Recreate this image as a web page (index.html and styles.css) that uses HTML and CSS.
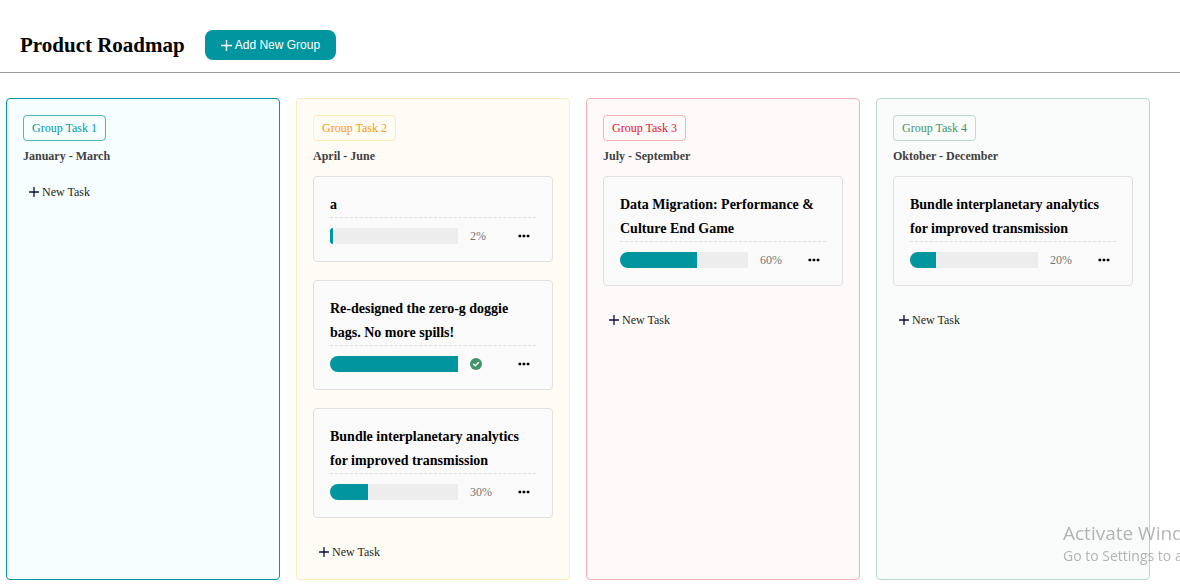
FILE: index.html
```html
<!DOCTYPE html>
<html lang="en">
<head>
<meta charset="utf-8">
<meta name="viewport" content="width=device-width, initial-scale=1">
<title>Product Roadmap</title>
<link rel="stylesheet" href="styles.css">
</head>
<body>
<svg class="sprite" aria-hidden="true">
  <symbol id="plus" viewBox="0 0 10 10"><path d="M5 0.5v9M0.5 5h9" fill="none" stroke="currentColor" stroke-width="1.3" stroke-linecap="round"/></symbol>
  <symbol id="dots" viewBox="0 0 12 4"><rect x="0.5" y="0.8" width="2.7" height="2.4" rx="0.6"/><rect x="4.6" y="0.8" width="2.7" height="2.4" rx="0.6"/><rect x="8.7" y="0.8" width="2.7" height="2.4" rx="0.6"/></symbol>
</svg>
<header class="header">
  <h1 class="title">Product Roadmap</h1>
  <button class="add-group" type="button"><svg class="plus"><use href="#plus"/></svg>Add New Group</button>
</header>
<main class="board">
  <section class="group group-teal">
    <h2 class="badge">Group Task 1</h2>
    <p class="period">January - March</p>
    <button class="new-task" type="button"><svg class="plus"><use href="#plus"/></svg>New Task</button>
  </section>

  <section class="group group-yellow">
    <h2 class="badge">Group Task 2</h2>
    <p class="period">April - June</p>
    <div class="cards">
      <article class="card">
        <h3 class="card-title">a</h3>
        <div class="card-row">
          <div class="bar"><div class="fill" style="width:2%"></div></div>
          <span class="percent">2%</span>
          <button class="more" type="button" aria-label="More"><svg class="dots"><use href="#dots"/></svg></button>
        </div>
      </article>
      <article class="card">
        <h3 class="card-title">Re-designed the zero-g doggie bags. No more spills!</h3>
        <div class="card-row">
          <div class="bar"><div class="fill" style="width:100%"></div></div>
          <span class="percent"><svg class="check" viewBox="0 0 12 12" role="img" aria-label="Done"><circle cx="6" cy="6" r="6" fill="#43936c"/><path d="M3.6 6.2l1.7 1.6 3.2-3.3" fill="none" stroke="#fff" stroke-width="1.5" stroke-linecap="round" stroke-linejoin="round"/></svg></span>
          <button class="more" type="button" aria-label="More"><svg class="dots"><use href="#dots"/></svg></button>
        </div>
      </article>
      <article class="card">
        <h3 class="card-title">Bundle interplanetary analytics for improved transmission</h3>
        <div class="card-row">
          <div class="bar"><div class="fill" style="width:30%"></div></div>
          <span class="percent">30%</span>
          <button class="more" type="button" aria-label="More"><svg class="dots"><use href="#dots"/></svg></button>
        </div>
      </article>
    </div>
    <button class="new-task" type="button"><svg class="plus"><use href="#plus"/></svg>New Task</button>
  </section>

  <section class="group group-red">
    <h2 class="badge">Group Task 3</h2>
    <p class="period">July - September</p>
    <div class="cards">
      <article class="card">
        <h3 class="card-title">Data Migration: Performance &amp; Culture End Game</h3>
        <div class="card-row">
          <div class="bar"><div class="fill" style="width:60%"></div></div>
          <span class="percent">60%</span>
          <button class="more" type="button" aria-label="More"><svg class="dots"><use href="#dots"/></svg></button>
        </div>
      </article>
    </div>
    <button class="new-task" type="button"><svg class="plus"><use href="#plus"/></svg>New Task</button>
  </section>

  <section class="group group-green">
    <h2 class="badge">Group Task 4</h2>
    <p class="period">Oktober - December</p>
    <div class="cards">
      <article class="card">
        <h3 class="card-title">Bundle interplanetary analytics for improved transmission</h3>
        <div class="card-row">
          <div class="bar"><div class="fill" style="width:20%"></div></div>
          <span class="percent">20%</span>
          <button class="more" type="button" aria-label="More"><svg class="dots"><use href="#dots"/></svg></button>
        </div>
      </article>
    </div>
    <button class="new-task" type="button"><svg class="plus"><use href="#plus"/></svg>New Task</button>
  </section>
</main>
<aside class="watermark">
  <p class="watermark-title">Activate Windows</p>
  <p class="watermark-text">Go to Settings to activate Windows.</p>
</aside>
</body>
</html>
```

FILE: styles.css
```css
* { box-sizing: border-box; }

body {
  margin: 0;
  overflow-x: hidden;
  background: #fff;
  color: #000;
  font-family: "Liberation Serif", "Times New Roman", serif;
}

h1, h2, h3, p { margin: 0; }

button {
  border: 0;
  background: none;
  font-family: inherit;
  cursor: pointer;
}

.sprite { position: absolute; width: 0; height: 0; }

.header {
  display: flex;
  align-items: center;
  gap: 20px;
  padding: 30px 20px 12px;
  border-bottom: 1px solid #9a9a9a;
}

.title { font-size: 21px; line-height: 30px; font-weight: 700; }

.plus { width: 10px; height: 10px; flex: none; }

.add-group {
  display: flex;
  align-items: center;
  gap: 3px;
  height: 30px;
  padding: 0 16px;
  border-radius: 8px;
  background: #01959f;
  color: #fff;
  font: 12px/16px "Liberation Sans", Arial, sans-serif;
}

.add-group .plus { width: 11px; height: 11px; }

.board {
  display: flex;
  gap: 16px;
  padding: 25px 30px 7px 6px;
}

.group {
  flex: 1 1 0;
  min-width: 0;
  display: flex;
  flex-direction: column;
  align-items: flex-start;
  padding: 16px 16px 11px;
  border: 1px solid;
  border-radius: 4px;
}

.group-teal { background: #f7feff; border-color: #01959f; }
.group-yellow { background: #fffcf5; border-color: #feeabc; }
.group-red { background: #fffafa; border-color: #f5b1b7; }
.group-green { background: #f8fbf9; border-color: #b8dbca; }

.badge {
  padding: 4px 8px;
  border: 1px solid;
  border-radius: 4px;
  font-size: 12px;
  line-height: 16px;
  font-weight: 400;
}

.group-teal .badge { color: #01959f; border-color: #4db5bc; }
.group-yellow .badge { color: #fa9810; border-color: #feeabc; }
.group-red .badge { color: #e11428; border-color: #f5b1b7; }
.group-green .badge { color: #43936c; border-color: #b8dbca; }

.period {
  padding: 5px 0 10px;
  color: #404040;
  font-size: 12px;
  line-height: 20px;
  font-weight: 700;
}

.cards {
  align-self: stretch;
  display: flex;
  flex-direction: column;
  gap: 18px;
  padding-bottom: 18px;
}

.card {
  padding: 16px 16px 17px;
  border: 1px solid #e0e0e0;
  border-radius: 4px;
  background: #fafafa;
}

.card-title {
  border-bottom: 1px dashed #e0e0e0;
  font-size: 14px;
  line-height: 24px;
  font-weight: 700;
}

.card-row {
  display: flex;
  align-items: center;
  gap: 12px;
  margin-top: 10px;
  height: 16px;
}

.bar {
  flex: 1;
  height: 16px;
  border-radius: 8px 0 0 8px;
  background: #ededed;
}

.fill {
  height: 16px;
  border-radius: 8px 0 0 8px;
  background: #01959f;
}

.percent {
  width: 36px;
  display: flex;
  align-items: center;
  color: #757575;
  font-size: 12px;
  line-height: 16px;
}

.check { width: 12px; height: 12px; }

.more { display: flex; padding: 4px 6px 4px 0; }

.dots { width: 12px; height: 4px; }

.new-task {
  display: flex;
  align-items: center;
  gap: 3px;
  padding: 6px;
  color: #1d1f20;
  font-size: 12px;
  line-height: 20px;
}

.new-task .plus { color: #0b0b3b; }

.watermark {
  position: fixed;
  left: calc(100% - 117px);
  bottom: 20px;
  color: rgba(110, 110, 110, 0.5);
  font-family: "Open Sans", "Noto Sans", sans-serif;
  white-space: nowrap;
  pointer-events: none;
}

.watermark-title { font-size: 19px; line-height: 24px; }
.watermark-text { font-size: 14px; line-height: 22px; }
```
